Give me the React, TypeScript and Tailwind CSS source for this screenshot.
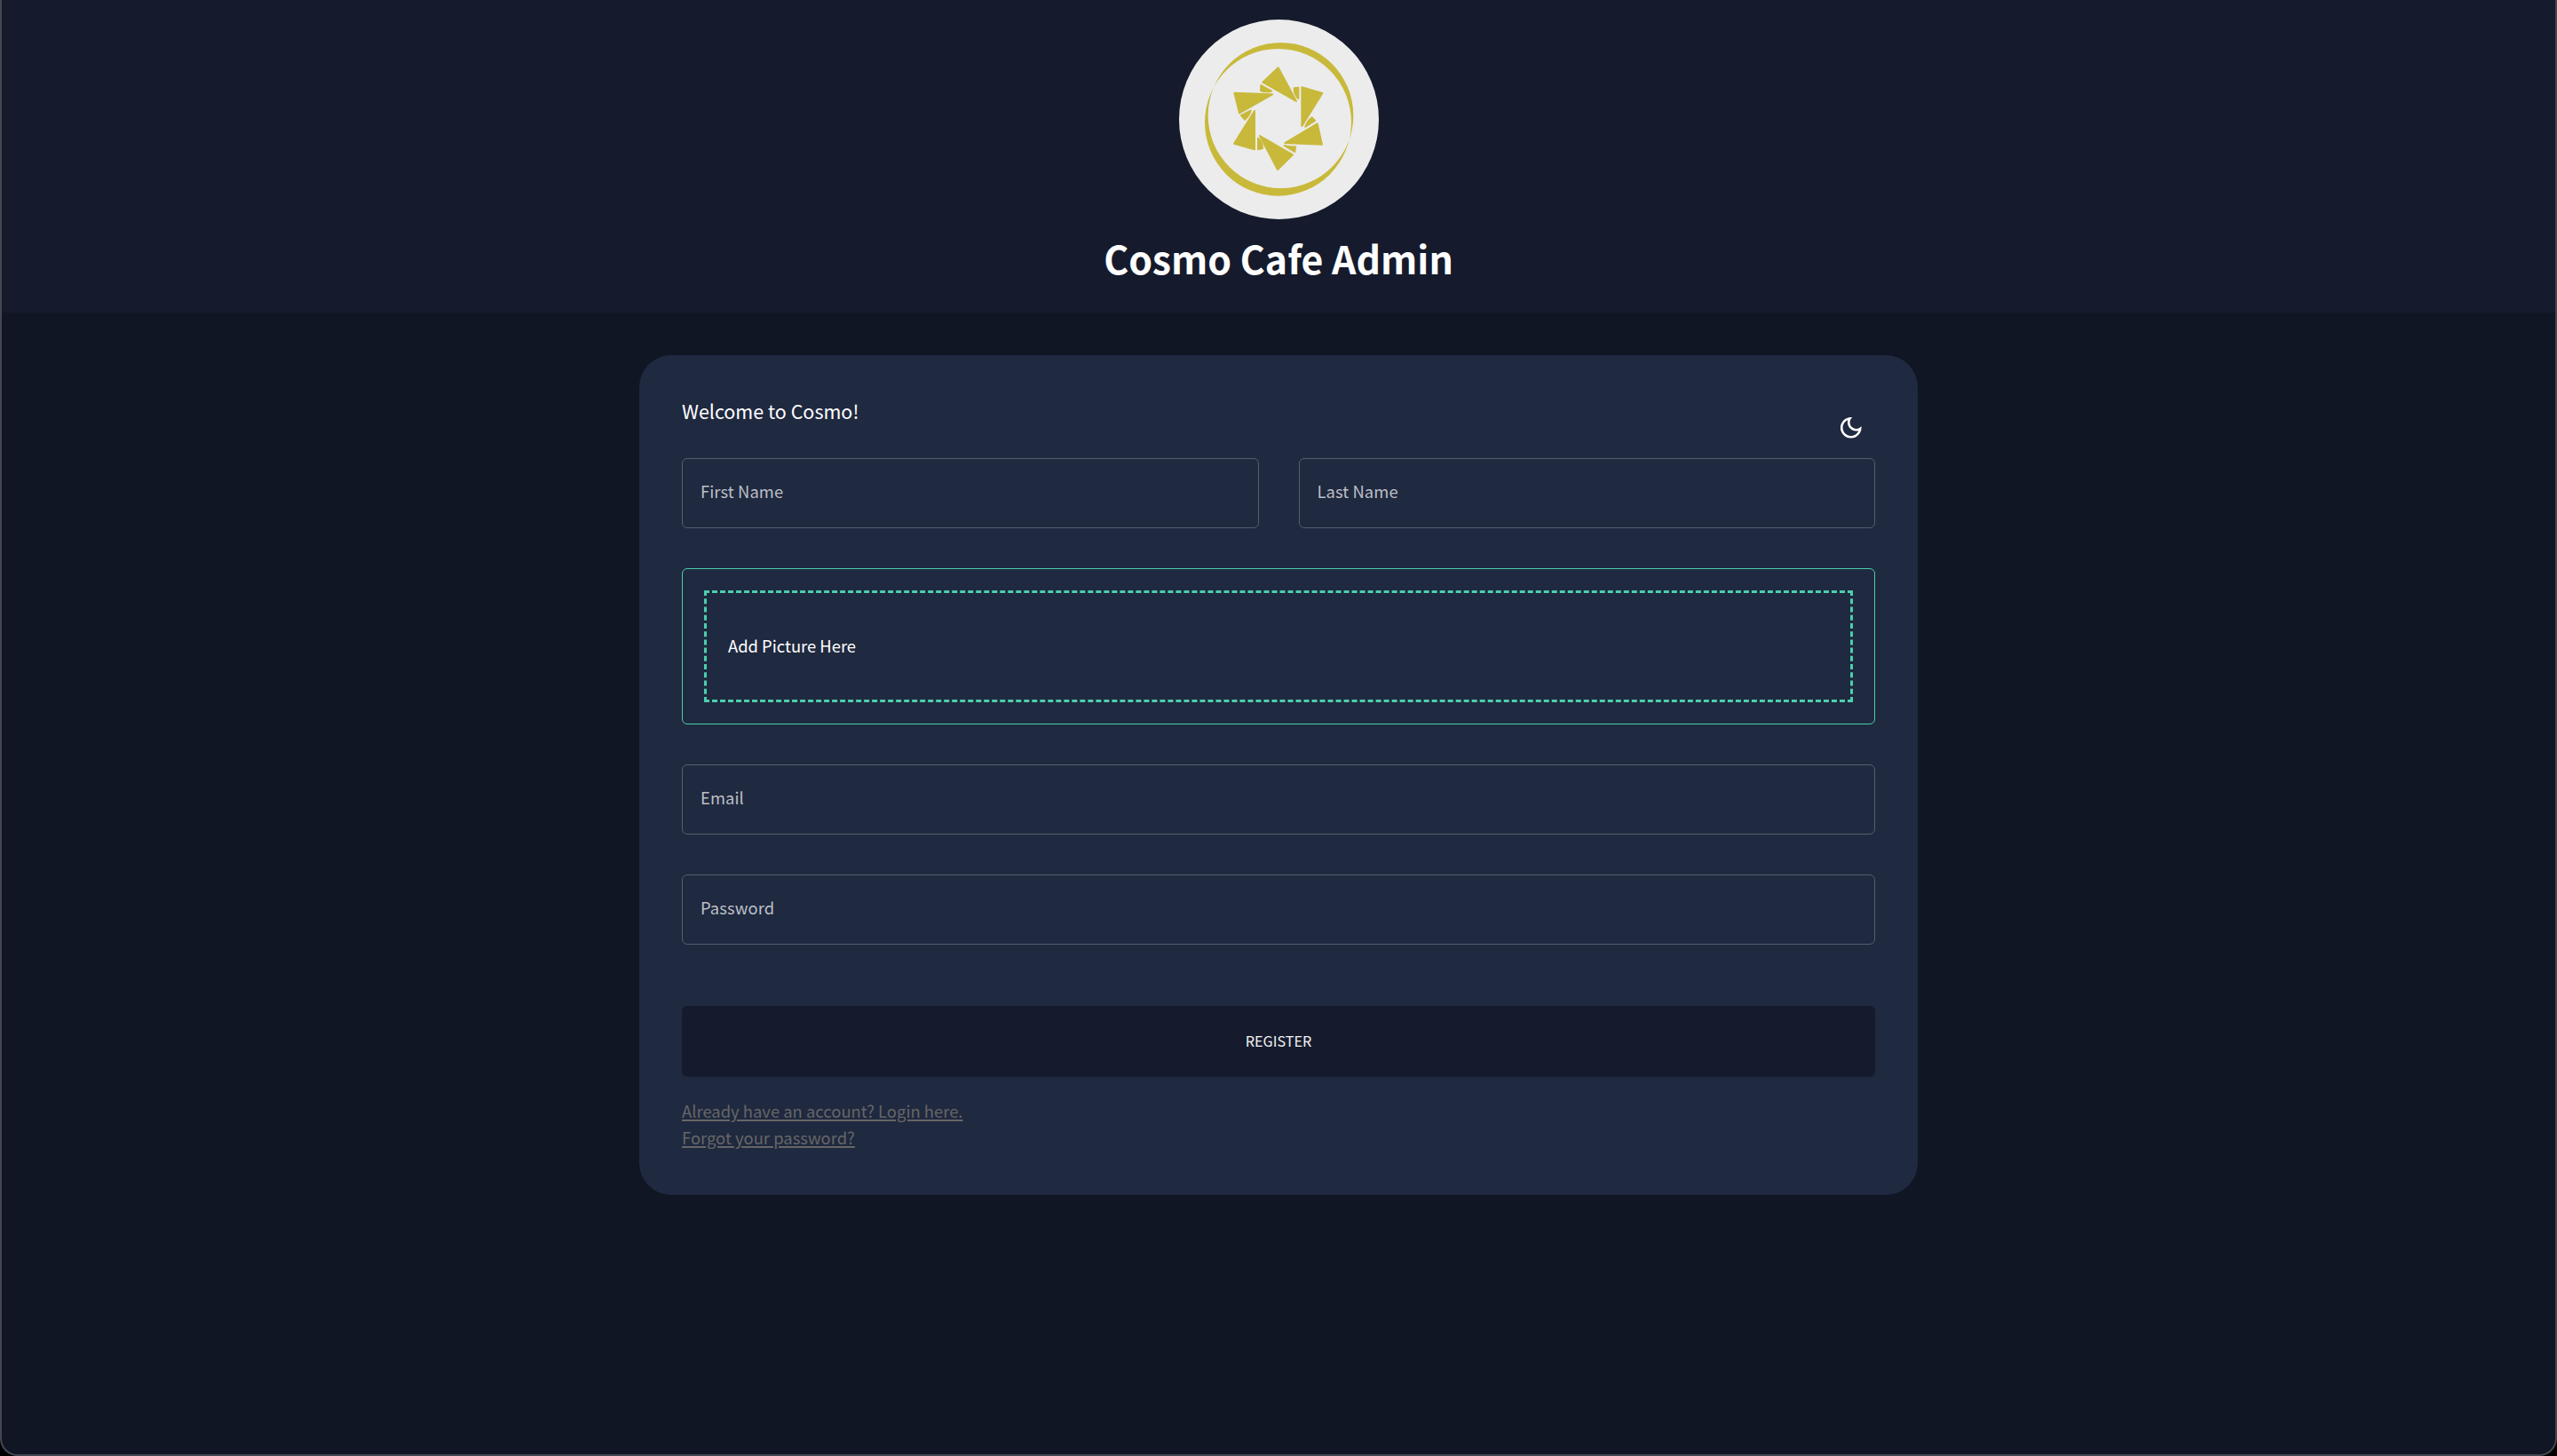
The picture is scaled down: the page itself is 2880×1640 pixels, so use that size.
import React from "react";

const GOLD = "#c9b93b";

function Logo() {
  return (
    <svg viewBox="54 36 675 675" className="size-[225px]" aria-label="Cosmo Cafe">
      <circle cx="391.5" cy="373.5" r="337.5" fill="#ececec" />
      <path
        fill={GOLD}
        fillRule="evenodd"
        d="M152 360a245.5 246 0 1 0 491 0a245.5 246 0 1 0 -491 0ZM141 383.5a247.5 248.5 0 1 0 495 0a247.5 248.5 0 1 0 -495 0Z"
      />
      <g fill={GOLD} stroke={GOLD} strokeWidth="6" strokeLinejoin="round">
        <path d="M389 199L450 312L337 248Z" />
        <path d="M469 265L538 285L469 396Z" />
        <path d="M521 388L537 458L412 453Z" />
        <path d="M327 429L438 493L387 543Z" />
        <path d="M309 345L309 475L240 455Z" />
        <path d="M241 284L369 289L258 352Z" />
        <path d="M331 258L366 278Q345 283 330 276Z" />
        <path d="M457 266L457 303Q442 287 443 268Z" />
        <path d="M503 367L513 378L481 398Q488 379 503 367Z" />
        <path d="M410 462Q427 467 447 466L445 483Z" />
        <path d="M321 437Q336 451 336 471L321 475Z" />
        <path d="M264 360L296 344Q290 363 276 374Z" />
      </g>
    </svg>
  );
}

function MoonIcon() {
  return (
    <svg viewBox="0 0 24 24" fill="currentColor" className="size-[31.5px]">
      <path d="M9.37 5.51c-.18.64-.27 1.31-.27 1.99 0 4.08 3.32 7.4 7.4 7.4.68 0 1.35-.09 1.99-.27C17.45 17.19 14.93 19 12 19c-3.86 0-7-3.14-7-7 0-2.93 1.81-5.45 4.37-6.49M12 3c-4.97 0-9 4.03-9 9s4.03 9 9 9 9-4.03 9-9c0-.46-.04-.92-.1-1.36-.98 1.37-2.58 2.26-4.4 2.26-2.98 0-5.4-2.42-5.4-5.4 0-1.81.89-3.42 2.26-4.4-.44-.06-.9-.1-1.36-.1" />
    </svg>
  );
}

function Field({ label }: { label: string }) {
  return (
    <label className="flex h-[79px] items-center rounded-md border border-[#545f6d] px-5 pb-1.5 text-[18.4px] leading-7 tracking-[0.08px] text-[#bcbfc6]">
      {label}
    </label>
  );
}

export default function App() {
  return (
    <div className="h-[1640px] w-full bg-black font-['Noto_Sans_CJK_SC',sans-serif] text-white">
      <div className="flex h-full flex-col overflow-hidden rounded-b-[20px] border-x-2 border-b-2 border-[#444752] bg-[#101623]">
        <header className="flex h-[352px] shrink-0 flex-col items-center bg-[#151b2c] pt-[22px]">
          <Logo />
          <h1 className="mt-[13px] text-[42.8px] leading-[60px] font-bold">Cosmo Cafe Admin</h1>
        </header>

        <main className="mx-auto mt-12 h-[946px] w-[1440px] shrink-0 rounded-[36px] bg-[#1f2940] px-12 pt-12">
          <div className="flex h-[68px] justify-between">
            <h2 className="text-[21.5px] leading-[29px]">Welcome to Cosmo!</h2>
            <button className="mr-3 flex h-[67px] items-center" aria-label="Toggle theme">
              <MoonIcon />
            </button>
          </div>

          <form className="flex flex-col">
            <div className="grid grid-cols-2 gap-[45px]">
              <Field label="First Name" />
              <Field label="Last Name" />
            </div>

            <div className="mt-[45px] h-44 rounded-md border border-[#4cceac] p-6">
              <div className="flex h-full items-center border-3 border-dashed border-[#4cceac] px-6 pb-0.5 text-[18.4px] leading-7">
                Add Picture Here
              </div>
            </div>

            <div className="mt-[45px] flex flex-col gap-[45px]">
              <Field label="Email" />
              <Field label="Password" />
            </div>

            <button
              type="button"
              className="mt-[69px] h-20 rounded-md bg-[#151b2c] pb-0.5 text-[16.2px] leading-7 text-[#f2f3f5]"
            >
              REGISTER
            </button>
          </form>

          <nav className="mt-[23px] flex flex-col items-start text-[18.43px] leading-[30px] text-[#666666]">
            <a className="underline decoration-2 underline-offset-2">Already have an account? Login here.</a>
            <a className="underline decoration-2 underline-offset-2">Forgot your password?</a>
          </nav>
        </main>
      </div>
    </div>
  );
}
